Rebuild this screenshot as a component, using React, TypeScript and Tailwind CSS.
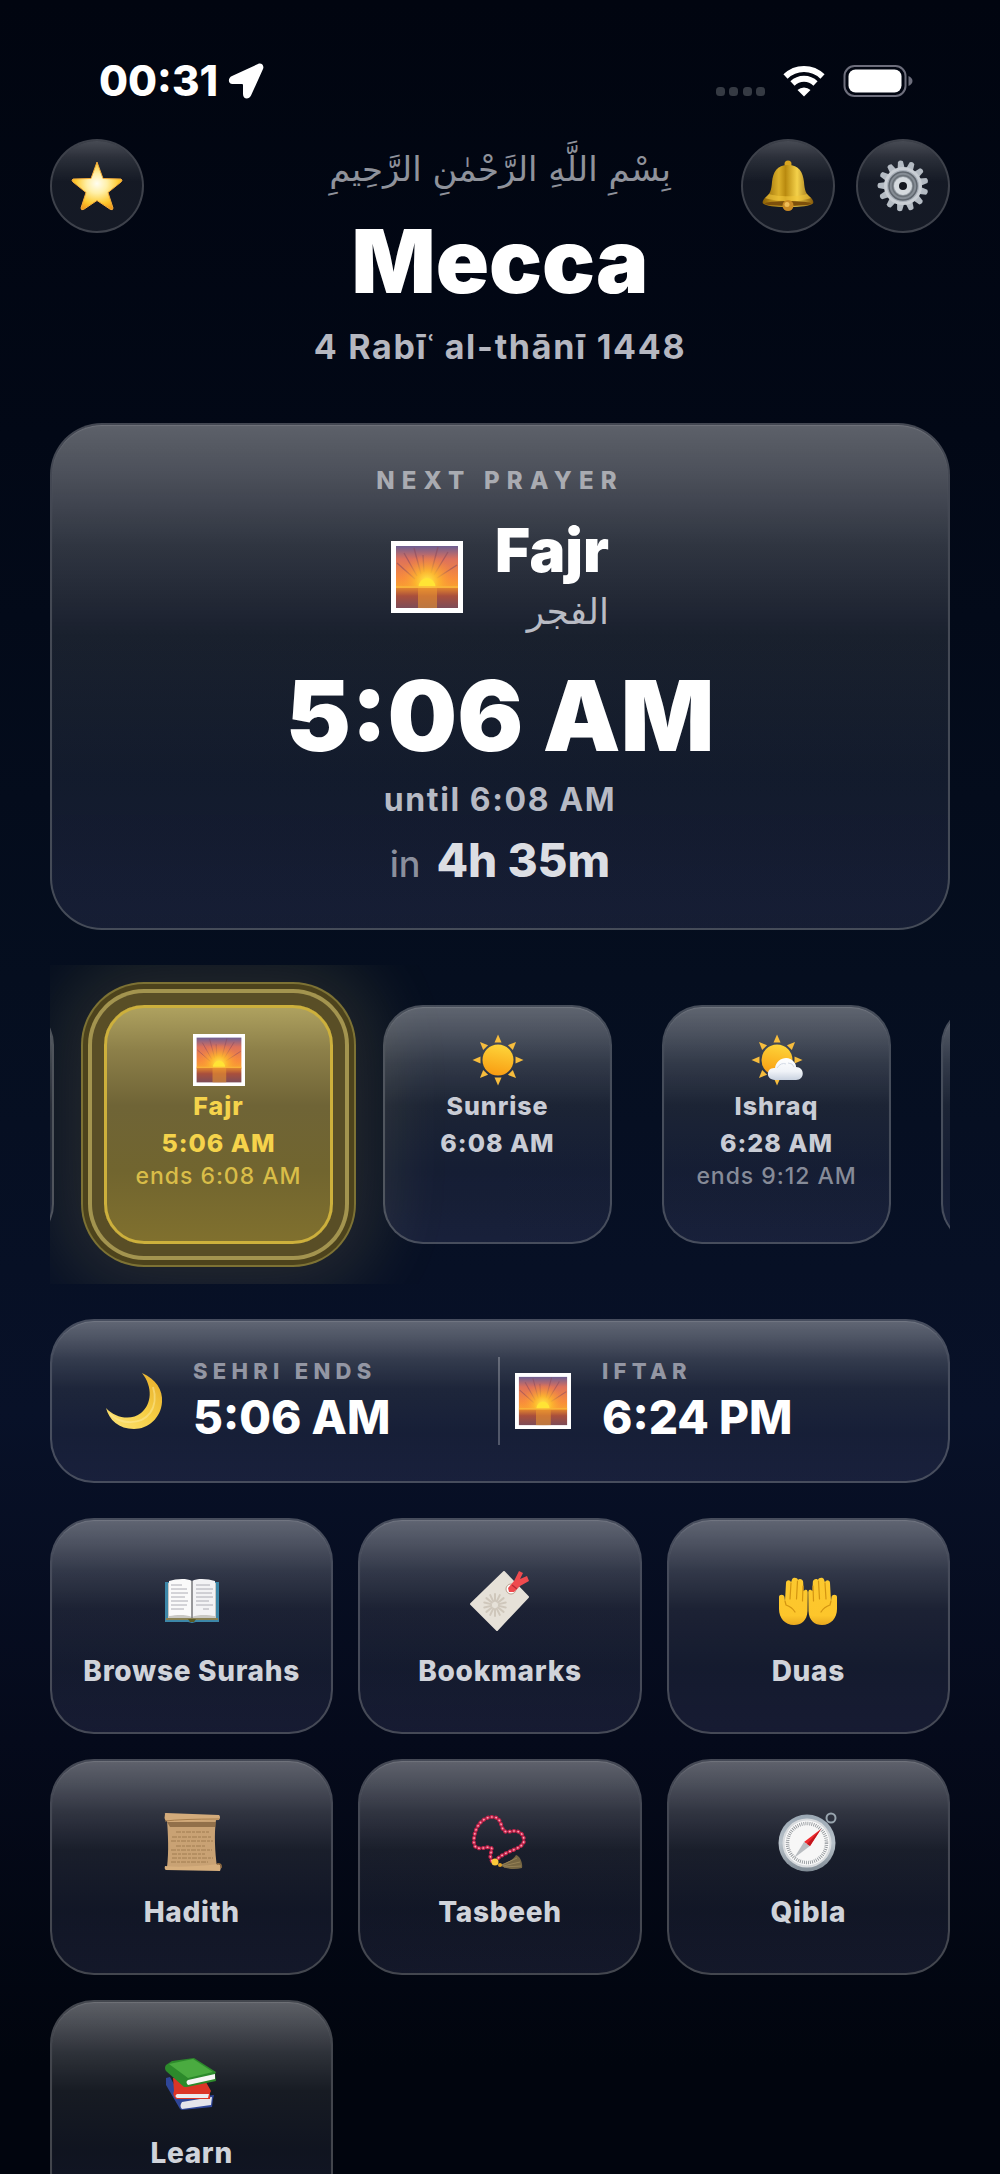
import { useId } from 'react';
import type { ReactNode } from 'react';

interface IconProps {
  className?: string;
}

interface PrayerCardProps {
  icon: ReactNode;
  name: string;
  time: string;
  ends?: string;
  active?: boolean;
}

const GLASS =
  'border-2 border-white/26 bg-clip-padding bg-[linear-gradient(180deg,rgba(255,255,255,0.36)_0%,rgba(255,255,255,0.29)_10%,rgba(255,255,255,0.18)_24%,rgba(255,255,255,0.09)_42%,rgba(200,205,255,0.08)_70%,rgba(180,180,255,0.1)_100%)] shadow-[inset_0_1px_1px_rgba(255,255,255,0.12)]';

const GLASS_ROUND =
  'border-2 border-white/24 bg-clip-padding bg-[linear-gradient(180deg,rgba(255,255,255,0.28)_0%,rgba(255,255,255,0.16)_20%,rgba(255,255,255,0.08)_45%,rgba(255,255,255,0.08)_100%)]';

const GOLD =
  'border-3 border-[#cdb03c] bg-[linear-gradient(180deg,#aea15f_0%,#8d8049_18%,#6f6436_42%,#71652f_70%,#80702e_100%)] shadow-[0_0_0_12px_#594e26,0_0_0_16px_#a3944f,0_0_0_21px_#4d431c,0_0_0_23px_#7d7234,0_0_70px_50px_rgba(250,220,120,0.12)]';

const StarIcon = () => (
  <svg viewBox="0 0 52 52" className="size-[52px]" aria-hidden="true">
    <defs>
      <radialGradient id="star" cx="50%" cy="45%" r="58%">
        <stop offset="0" stopColor="#fffdf0" />
        <stop offset="0.35" stopColor="#fff0a8" />
        <stop offset="0.75" stopColor="#fdc92f" />
        <stop offset="1" stopColor="#ef9b1c" />
      </radialGradient>
    </defs>
    <path
      d="M26 2 L32 18.500 L50 19 Q52 20 50 22 L37 32.500 L42 48 Q42 50.500 39.500 49.500 L26 40.500 L12.500 49.500 Q10 50.500 10 48 L15 32.500 L2 22 Q0 20 2 19 L20 18.500 Z"
      fill="url(#star)"
      stroke="#f3aa3a"
      strokeWidth="1"
      strokeLinejoin="round"
    />
  </svg>
);

const BellIcon = () => (
  <svg viewBox="0 0 52 52" className="size-[52px]" aria-hidden="true">
    <defs>
      <linearGradient id="bell" x1="0" x2="1">
        <stop offset="0" stopColor="#8a5f04" />
        <stop offset="0.32" stopColor="#dcb02a" />
        <stop offset="0.45" stopColor="#b98a0f" />
        <stop offset="0.68" stopColor="#f4d14a" />
        <stop offset="1" stopColor="#85590a" />
      </linearGradient>
    </defs>
    <circle cx="26" cy="4" r="3.500" fill="#d9a520" />
    <path
      d="M26 5 C37 5 41 12 42 22 C42.500 30 44 34 48 37 C51 39.500 52 42 51 43.500 C49 46 38 47 26 47 C14 47 3 46 1 43.500 C0 42 1 39.500 4 37 C8 34 9.500 30 10 22 C11 12 15 5 26 5 Z"
      fill="url(#bell)"
    />
    <path d="M7 34 C15 37 37 37 45 34 L49 38 C38 42 14 42 3 38 Z" fill="#f1c63a" opacity="0.6" />
    <ellipse cx="26" cy="43.500" rx="23" ry="2.500" fill="#7d500b" />
    <circle cx="26" cy="45.500" r="5.500" fill="#c98a24" />
    <circle cx="25" cy="44.500" r="2.500" fill="#f0bd58" />
  </svg>
);

const GearIcon = () => (
  <svg viewBox="-26 -26 52 52" className="size-[52px]" aria-hidden="true">
    {Array.from({ length: 13 }, (_, i) => (
      <path
        key={i}
        d="M-3.500 -18 L-2.500 -24.500 Q0 -26.500 2.500 -24.500 L3.500 -18 Z"
        fill="#b4bbc3"
        transform={`rotate(${(i * 360) / 13 - 6})`}
      />
    ))}
    <circle r="18" fill="#a9b0b9" />
    <circle r="17.500" fill="none" stroke="#c9ced4" strokeWidth="3" />
    <circle r="14" fill="#868d95" stroke="#5f666e" strokeWidth="1.500" />
    <circle r="10.500" fill="#989fa7" stroke="#6b7279" strokeWidth="1.500" />
    <circle r="6.500" fill="#15181f" stroke="#d5dade" strokeWidth="5" />
  </svg>
);

const SunriseIcon = ({ className }: IconProps) => {
  const id = useId();
  return (
    <svg viewBox="0 0 72 72" className={className} aria-hidden="true">
      <defs>
        <linearGradient id={`${id}sky`} x1="0" y1="0" x2="0" y2="1">
          <stop offset="0" stopColor="#6d5f93" />
          <stop offset="0.3" stopColor="#dc705c" />
          <stop offset="0.75" stopColor="#f88c3c" />
          <stop offset="1" stopColor="#f9a52e" />
        </linearGradient>
        <linearGradient id={`${id}sea`} x1="0" y1="0" x2="0" y2="1">
          <stop offset="0" stopColor="#e0832f" />
          <stop offset="0.4" stopColor="#a94f3c" />
          <stop offset="1" stopColor="#7d4c58" />
        </linearGradient>
        <radialGradient id={`${id}glow`}>
          <stop offset="0" stopColor="#fff04a" />
          <stop offset="0.4" stopColor="#fdbb2d" stopOpacity="0.85" />
          <stop offset="1" stopColor="#fa8a3a" stopOpacity="0" />
        </radialGradient>
      </defs>
      <rect width="72" height="72" fill="#fff" />
      <rect x="5" y="5" width="62" height="43" fill={`url(#${id}sky)`} />
      <g stroke="#8d4c5e" strokeWidth="1.300" opacity="0.6">
        <path d="M30 33 L23 7 M33 31 L32 14 M40 32 L47 6 M43 34 L57 11 M46 37 L66 24 M26 35 L13 12 M24 38 L6 22" />
      </g>
      <circle cx="36" cy="41" r="28" fill={`url(#${id}glow)`} />
      <rect x="5" y="47" width="62" height="20" fill={`url(#${id}sea)`} />
      <rect x="27" y="47" width="19" height="20" fill="#ee9a2f" opacity="0.55" />
      <path d="M27.500 46 A8.500 9 0 0 1 44.500 46 Z" fill="#ffe435" />
      <path d="M5 46 H67" stroke="#f8b73c" strokeWidth="1.500" />
    </svg>
  );
};

const SunRays = () => (
  <>
    {Array.from({ length: 8 }, (_, i) => (
      <path key={i} d="M-3.500 -17.500 L0 -25.500 L3.500 -17.500 Z" fill="#f7bd3d" transform={`rotate(${i * 45})`} />
    ))}
  </>
);

const SunIcon = () => (
  <svg viewBox="-26 -26 52 52" className="size-[52px]" aria-hidden="true">
    <defs>
      <linearGradient id="sun" x1="0.6" y1="0" x2="0.4" y2="1">
        <stop offset="0" stopColor="#fdd53a" />
        <stop offset="1" stopColor="#f99c12" />
      </linearGradient>
    </defs>
    <SunRays />
    <circle r="15.500" fill="url(#sun)" />
  </svg>
);

const SunCloudIcon = () => (
  <svg viewBox="-26 -26 52 52" className="size-[52px]" aria-hidden="true">
    <defs>
      <linearGradient id="cloud" x1="0" y1="0" x2="0" y2="1">
        <stop offset="0" stopColor="#ffffff" />
        <stop offset="0.6" stopColor="#f0f3f8" />
        <stop offset="1" stopColor="#c9d2e0" />
      </linearGradient>
    </defs>
    <SunRays />
    <circle r="15.500" fill="url(#sun)" />
    <path
      d="M-2 20 C-12 20 -11 7 -2 8 C-1 -1 11 -6 17 2 C19 4 19 6 19 7 C28 7 28 20 19 20 Z"
      fill="url(#cloud)"
    />
    <path d="M0 8 Q4 2 9 4 M11 3 Q16 3 17 7" stroke="#d3dae6" fill="none" />
  </svg>
);

const MoonIcon = () => (
  <svg viewBox="0 0 58 58" className="size-[58px]" aria-hidden="true">
    <defs>
      <linearGradient id="moon" x1="0" y1="1" x2="1" y2="0">
        <stop offset="0" stopColor="#fbe37a" />
        <stop offset="0.5" stopColor="#f6cf45" />
        <stop offset="1" stopColor="#e6ab2a" />
      </linearGradient>
    </defs>
    <path
      d="M37 1 C51 7 58 18 57 30 C56 46 43 57 29 57 C14 57 4 48 1 36 C10 46 26 49 36 41 C47 32 48 15 37 1 Z"
      fill="url(#moon)"
    />
    <path d="M5 42 C16 53 36 53 45 41 C50 34 51 24 48 15" stroke="#fdeb9d" strokeWidth="2" fill="none" opacity="0.5" />
  </svg>
);

const BookIcon = () => (
  <svg viewBox="0 0 60 60" className="size-[60px]" aria-hidden="true">
    <path d="M3 11 H57 V51 H34 L30 52 L26 51 H3 Z" fill="#3d87a8" />
    <path d="M6 12 H54 V48 H6 Z" fill="#c9c8c4" />
    <path d="M30 46 C23 43 14 44 7 45 V10 C14 8 24 7 30 10 Z" fill="#fafafa" />
    <path d="M30 46 C37 43 46 44 53 45 V10 C46 8 36 7 30 10 Z" fill="#f3f3f5" />
    <path d="M4 48 H56" stroke="#8a8153" strokeWidth="2" />
    <path d="M26 48 H34 L32 51 H28 Z" fill="#5b5a25" />
    <path d="M30 10 V47" stroke="#77777a" strokeWidth="1.500" />
    <path
      d="M9 14 H20 M9 18 H25 M9 22 H26 M9 26 H23 M9 30 H26 M9 34 H25 M9 38 H22 M34 14 H48 M34 18 H51 M34 22 H50 M34 26 H51 M34 30 H47 M34 34 H51 M41 38 H47"
      stroke="#9a9aa3"
      strokeWidth="0.800"
    />
  </svg>
);

const BookmarkIcon = () => (
  <svg viewBox="0 0 60 60" className="size-[60px]" aria-hidden="true">
    <path d="M34 1 L58 26 L27 59 L1 33 Z" fill="#e6e1d8" stroke="#e6e1d8" strokeWidth="2" strokeLinejoin="round" />
    <g stroke="#cfc7bb" strokeWidth="2" strokeLinecap="round" transform="translate(25 34)">
      {Array.from({ length: 14 }, (_, i) => (
        <path key={i} d="M0 -4 V-11" transform={`rotate(${(i * 360) / 14})`} />
      ))}
    </g>
    <circle cx="41" cy="18" r="5" fill="#fff" stroke="#b9a08c" strokeWidth="1" />
    <path d="M38 17 L44 10 L49 0 L53 2 L50 8 L57 5 L59 10 L50 15 L44 21 L39 21 Z" fill="#ef4a4e" />
    <path d="M42 14 L47 18" stroke="#b82c35" strokeWidth="1.500" />
  </svg>
);

const Palm = () => (
  <>
    <path
      d="M1 20 C1 17 6 17 6.500 20 L7 24 L8 6 C8 2.500 12.500 2.500 13 5.500 L14 2.500 C14.500 0 19.500 0 20 3 C21 1 25.500 2 25.200 5.500 L25.500 14 C29 11 30 14 29.700 17 L29.500 34 C29 44 23 48 16 48 C7 48 1 41 1 32 Z"
      fill="url(#palm)"
    />
    <path
      d="M13 6 L12 22 M19.500 4 L18.500 22 M25 9 L24.500 24 M7 24 L8 28 Q14 30 17 35"
      stroke="#d39512"
      strokeWidth="1.200"
      fill="none"
      strokeLinecap="round"
    />
  </>
);

const PalmsIcon = () => (
  <svg viewBox="0 -6 60 60" className="size-[60px]" aria-hidden="true">
    <defs>
      <linearGradient id="palm" x1="0" y1="0" x2="0" y2="1">
        <stop offset="0" stopColor="#fcc92f" />
        <stop offset="0.8" stopColor="#fdc62b" />
        <stop offset="1" stopColor="#e9a91f" />
      </linearGradient>
    </defs>
    <Palm />
    <g transform="translate(60 0) scale(-1 1)">
      <Palm />
    </g>
  </svg>
);

const ScrollIcon = () => (
  <svg viewBox="0 0 60 60" className="size-[60px]" aria-hidden="true">
    <path d="M5 8 L54 8 C52 22 53 40 55 55 H5 C7 40 6 22 5 8 Z" fill="#c9a274" />
    <path d="M5 10 H54 L53.500 15 H8 Z" fill="#7a5b39" opacity="0.7" />
    <path d="M3 2 Q2 1 4 1 L57 3 Q59 5 57 8 L8 10 Q1 10 3 2 Z" fill="#d3ab7b" />
    <path d="M3 9 Q20 7 57 7" stroke="#a57c4c" fill="none" />
    <path d="M3 54 Q20 56 57 52 Q60 54 58 59 L4 58 Q2 57 3 54 Z" fill="#d6ae7d" />
    <path d="M55 52 Q60 51 59 56" stroke="#916b40" fill="none" strokeWidth="1.500" />
    <path
      d="M14 20 H47 M10 25 H50 M9 29 H51 M14 34 H44 M9 38 H50 M10 42 H43 M10 46 H51 M9 50 H46"
      stroke="#a07c51"
      strokeWidth="1"
      strokeDasharray="5 1 3 1"
    />
  </svg>
);

const STRING =
  'M22 49 C17 42 26 36 19 35 C9 37 3 38 4 27 C5 13 14 4 24 5 C34 7 29 20 38 20 C48 17 54 21 54 29 C52 38 38 37 26 48';

const BeadsIcon = () => (
  <svg viewBox="0 0 60 60" className="size-[60px]" aria-hidden="true">
    <g fill="none" strokeLinecap="round" strokeDasharray="0.500 3.800">
      <path d={STRING} stroke="#c4234a" strokeWidth="4" />
      <path d={STRING} stroke="#ff9fb5" strokeWidth="1.600" />
    </g>
    <path d="M29 53 C39 50 44 47 46 43 C50 44 53 51 52 56 C44 58 36 57 29 53 Z" fill="#766642" />
    <path d="M32 53 L47 46 M33 54 L50 50 M34 55 L51 54" stroke="#958156" />
    <circle cx="25" cy="50" r="3.500" fill="#fbc93a" />
    <circle cx="30" cy="53" r="2" fill="#e0a124" />
  </svg>
);

const CompassIcon = () => (
  <svg viewBox="0 0 60 60" className="size-[60px]" aria-hidden="true">
    <defs>
      <linearGradient id="rim" x1="0" y1="0" x2="0" y2="1">
        <stop offset="0" stopColor="#9aa7b3" />
        <stop offset="0.5" stopColor="#b9c2ca" />
        <stop offset="1" stopColor="#7f8a94" />
      </linearGradient>
    </defs>
    <circle cx="53" cy="6" r="4.500" fill="none" stroke="#98a4ae" strokeWidth="2" />
    <circle cx="29" cy="31" r="28.500" fill="url(#rim)" />
    <circle cx="29" cy="31" r="24.500" fill="#d9dcdf" />
    <circle cx="29" cy="31" r="22.500" fill="#f7f7f7" />
    <circle cx="29" cy="31" r="19.500" fill="none" stroke="#8b9095" strokeWidth="3.500" strokeDasharray="0.800 1.240" />
    <path d="M43 17 L26 30 L32 34 Z" fill="#ef2b2f" />
    <path d="M16 46 L26 30 L32 34 Z" fill="#b9bdc1" />
    <path d="M43 17 L29 32 L32 34 Z" fill="#c3161d" />
  </svg>
);

const BooksIcon = () => (
  <svg viewBox="0 0 60 60" className="size-[60px]" aria-hidden="true">
    <path d="M4 25 L8 24 L20 46 L52 42 L51 46 L50 54 L20 57 L18 56 L4 32 Z" fill="#2f4698" />
    <path d="M20 49 L50 44 L49 52 L20 56 Q17 53 20 49 Z" fill="#e4e4ea" />
    <path d="M11 25 L40 22 L49 38 L48 40 L48 46 L14 46 Q10 42 12 38 Z" fill="#dc3527" />
    <path d="M15 41 H47 L46 45 H15 Q12 43 15 41 Z" fill="#ececef" />
    <path d="M4 12 L10 8 L32 5 L54 19 L53 21 L54 28 L25 34 L22 34 L4 18 Q2 15 4 12 Z" fill="#2c8a2b" />
    <path d="M7 11 L31 6 L51 19 L26 25 Z" fill="#4aab40" />
    <path d="M26 27 L53 21 V26 L26 32 Q23 29 26 27 Z" fill="#f6f6f6" />
  </svg>
);

function StatusBar() {
  return (
    <div className="flex h-[50px] items-center justify-between pr-[37px] pl-[49px] text-white">
      <div className="flex items-center gap-2.5">
        <span className="text-[42px] leading-none font-extrabold">00:31</span>
        <svg viewBox="0 0 36 36" className="size-9" aria-label="Location">
          <path
            d="M30 1 L4 13 C-0.500 15 0 21 4.500 21 L14 21 Q15 21 15 22 L15 31 C15 36.500 21 37 23 32.500 L35 6 C36.500 2.500 33.500 -0.500 30 1 Z"
            fill="currentColor"
          />
        </svg>
      </div>
      <div className="flex items-center gap-[18px]">
        <svg viewBox="0 0 49 34" className="h-[34px] w-[49px]" aria-label="No signal">
          {[4, 17, 31, 44].map((x) => (
            <rect key={x} x={x - 4} y="23" width="9" height="9" rx="3.500" fill="#353a43" />
          ))}
        </svg>
        <svg viewBox="0 0 42 32" className="h-8 w-[42px]" aria-label="Wi-Fi">
          <g fill="none" stroke="currentColor" strokeWidth="6">
            <path d="M2.500 11.500 A26.500 26.500 0 0 1 39.500 11.500" />
            <path d="M9.500 18.500 A16.500 16.500 0 0 1 32.500 18.500" />
          </g>
          <path d="M14.500 25 A9.500 9.500 0 0 1 27.500 25 L21 31.500 Z" fill="currentColor" />
        </svg>
        <svg viewBox="0 0 70 32" className="h-8 w-[70px]" aria-label="Battery">
          <rect x="1.500" y="1" width="61" height="30" rx="10" fill="none" stroke="#6d6e7c" strokeWidth="2" />
          <rect x="5.500" y="4.500" width="53" height="23" rx="7" fill="currentColor" />
          <path d="M65.500 11 Q69.500 13 69.500 16 Q69.500 19 65.500 21 Z" fill="#6d6e7c" />
        </svg>
      </div>
    </div>
  );
}

function RoundButton({ label, children }: { label: string; children: ReactNode }) {
  return (
    <button
      type="button"
      aria-label={label}
      className={`flex size-[94px] items-center justify-center rounded-full ${GLASS_ROUND}`}
    >
      {children}
    </button>
  );
}

function PrayerCard({ icon, name, time, ends, active }: PrayerCardProps) {
  return (
    <article
      className={`flex min-h-[239px] w-[229px] shrink-0 flex-col items-center rounded-[40px] tracking-[0.06em] ${active ? `pt-[26px] text-[#f5d34b] ${GOLD}` : `pt-[27px] text-[#c9ccd5] ${GLASS}`}`}
    >
      {icon}
      <h3 className="mt-0.5 text-[25px] leading-9 font-extrabold">{name}</h3>
      <p className="text-[25px] leading-[38px] font-extrabold">{time}</p>
      {ends && (
        <p className={`text-[23px] leading-7 font-medium ${active ? 'text-[#d9bd48]' : 'text-[#868b98]'}`}>
          ends {ends}
        </p>
      )}
    </article>
  );
}

const TILES = [
  { label: 'Browse Surahs', icon: <BookIcon /> },
  { label: 'Bookmarks', icon: <BookmarkIcon /> },
  { label: 'Duas', icon: <PalmsIcon /> },
  { label: 'Hadith', icon: <ScrollIcon /> },
  { label: 'Tasbeeh', icon: <BeadsIcon /> },
  { label: 'Qibla', icon: <CompassIcon /> },
  { label: 'Learn', icon: <BooksIcon /> },
];

export default function App() {
  return (
    <div className="h-screen overflow-y-auto bg-[linear-gradient(180deg,#010510_0%,#020816_20%,#050e1f_45%,#081128_65%,#050a1b_80%,#01050e_95%)] font-['Inter','DejaVu_Sans',sans-serif] text-white [scrollbar-width:none]">
      <div className="px-[50px] pt-14 pb-12">
        <StatusBar />

        <header className="mt-[33px] grid grid-cols-[1fr_auto_1fr] items-start">
          <div>
            <RoundButton label="Favourites">
              <StarIcon />
            </RoundButton>
          </div>
          <div className="pt-2 text-center">
            <p
              lang="ar"
              dir="rtl"
              className="font-['DejaVu_Sans',sans-serif] text-[34px] leading-11 text-[#8f929b]"
            >
              بِسْمِ اللَّهِ الرَّحْمٰنِ الرَّحِيمِ
            </p>
            <h1 className="mt-5 text-[88px] leading-[100px] font-black">Mecca</h1>
            <p className="mt-3.5 text-[34px] leading-11 font-bold tracking-wider text-[#b5b7c0]">
              4 Rabīʿ al-thānī 1448
            </p>
          </div>
          <div className="flex justify-end gap-[21px]">
            <RoundButton label="Notifications">
              <BellIcon />
            </RoundButton>
            <RoundButton label="Settings">
              <GearIcon />
            </RoundButton>
          </div>
        </header>

        <section className={`mt-[54px] flex flex-col items-center rounded-[52px] pt-10 pb-9 ${GLASS}`}>
          <h2 className="text-[24px] leading-8 font-extrabold tracking-[0.3em] text-[#a9abb1]">NEXT PRAYER</h2>
          <div className="mt-5 flex items-center gap-8">
            <SunriseIcon className="size-[72px]" />
            <div>
              <p className="text-[60px] leading-[66px] font-black">Fajr</p>
              <p
                lang="ar"
                dir="rtl"
                className="mt-1 font-['DejaVu_Sans',sans-serif] text-[36px] leading-[49px] text-[#b9bbc4]"
              >
                الفجر
              </p>
            </div>
          </div>
          <p className="mt-6 text-[98px] leading-28 font-black">5:06 AM</p>
          <p className="mt-2 text-[32px] leading-10 font-bold tracking-wider text-[#b7bac4]">until 6:08 AM</p>
          <p className="mt-3 flex items-baseline gap-4 leading-14">
            <span className="text-[36px] font-medium text-[#8b8f9d]">in</span>
            <span className="text-[46px] font-extrabold text-[#dcdee3]">4h 35m</span>
          </p>
        </section>

        <section
          aria-label="Prayer times"
          className="mt-[35px] flex gap-[50px] overflow-hidden py-10 pl-[54px]"
        >
          <div aria-hidden="true" className={`-ml-[279px] w-[229px] shrink-0 rounded-[40px] ${GLASS}`} />
          <PrayerCard
            icon={<SunriseIcon className="size-[52px]" />}
            name="Fajr"
            time="5:06 AM"
            ends="6:08 AM"
            active
          />
          <PrayerCard icon={<SunIcon />} name="Sunrise" time="6:08 AM" />
          <PrayerCard icon={<SunCloudIcon />} name="Ishraq" time="6:28 AM" ends="9:12 AM" />
          <div aria-hidden="true" className={`w-[229px] shrink-0 rounded-[40px] ${GLASS}`} />
        </section>

        <section className={`mt-[35px] grid grid-cols-2 rounded-[44px] py-9 ${GLASS}`}>
          <div className="flex items-center gap-[30px] border-r-2 border-white/25 pl-[53px]">
            <MoonIcon />
            <div>
              <h2 className="text-[22px] leading-7 font-extrabold tracking-[0.24em] text-[#9396a3]">SEHRI ENDS</h2>
              <p className="mt-1 text-[46px] leading-14 font-extrabold">5:06 AM</p>
            </div>
          </div>
          <div className="flex items-center gap-[31px] pl-[15px]">
            <SunriseIcon className="size-[56px]" />
            <div>
              <h2 className="text-[22px] leading-7 font-extrabold tracking-[0.24em] text-[#9396a3]">IFTAR</h2>
              <p className="mt-1 text-[46px] leading-14 font-extrabold">6:24 PM</p>
            </div>
          </div>
        </section>

        <nav className="mt-[35px] grid grid-cols-3 gap-[25px]">
          {TILES.map(({ label, icon }) => (
            <button
              key={label}
              type="button"
              className={`flex flex-col items-center rounded-[44px] pt-[51px] pb-[41px] ${GLASS}`}
            >
              {icon}
              <span className="mt-5 text-[28px] leading-10 font-extrabold tracking-wide text-[#d0d3da]">{label}</span>
            </button>
          ))}
        </nav>
      </div>
    </div>
  );
}
